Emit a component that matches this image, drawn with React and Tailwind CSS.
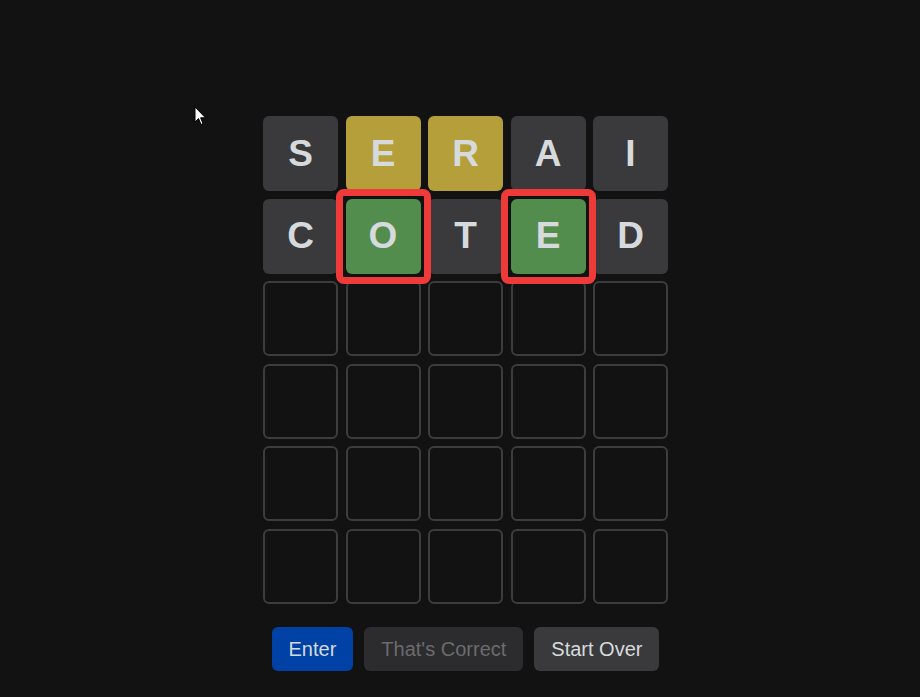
import React from "react";

const rows = [
  [
    ["S", "gray"],
    ["E", "yellow"],
    ["R", "yellow"],
    ["A", "gray"],
    ["I", "gray"],
  ],
  [
    ["C", "gray"],
    ["O", "green", true],
    ["T", "gray"],
    ["E", "green", true],
    ["D", "gray"],
  ],
];

const colors = {
  gray: "bg-[#3a3a3c]",
  yellow: "bg-[#b59f3b]",
  green: "bg-[#538d4e]",
};

function Tile({ letter, color, marked }) {
  if (!letter) {
    return (
      <div className="w-[75px] h-[75px] rounded-[6px] border-2 border-[#3d3d3f]" />
    );
  }
  return (
    <div
      className={`relative w-[75px] h-[75px] rounded-[6px] flex items-center justify-center text-[37px] font-bold text-[#d7dadc] ${colors[color]}`}
    >
      {letter}
      {marked && (
        <div className="absolute z-10 -inset-[10px] rounded-[8px] border-[7px] border-[#ef3a3a]" />
      )}
    </div>
  );
}

export default function App() {
  const grid = [...rows];
  while (grid.length < 6) grid.push([[], [], [], [], []]);

  return (
    <div
      className="relative min-h-screen bg-[#121212] flex flex-col items-center pt-[116px] pl-[11px]"
      style={{ fontFamily: '"Liberation Sans", Arial, sans-serif' }}
    >
      <svg
        className="absolute left-[194px] top-[106px]"
        width="13"
        height="20"
        viewBox="0 0 13 20"
      >
        <path
          d="M1 1 L1 16 L4.5 12.5 L7 18.5 L9 17.6 L6.6 11.8 L11.5 11.8 Z"
          fill="#fff"
          stroke="#000"
          strokeWidth="1"
        />
      </svg>
      <div className="flex flex-col gap-[7.6px]">
        {grid.map((row, i) => (
          <div key={i} className="flex gap-[7.5px]">
            {row.map((t, j) => (
              <Tile key={j} letter={t[0]} color={t[1]} marked={t[2]} />
            ))}
          </div>
        ))}
      </div>
      <div className="flex gap-[11px] mt-[23px]">
        <button className="h-[44px] px-[17px] rounded-[6px] bg-[#0041a6] text-[20px] text-[#d7dadc]">
          Enter
        </button>
        <button className="h-[44px] px-[17px] rounded-[6px] bg-[#2c2c2e] text-[20px] text-[#6b6b6d]">
          That's Correct
        </button>
        <button className="h-[44px] px-[17px] rounded-[6px] bg-[#3a3a3c] text-[20px] text-[#d7dadc]">
          Start Over
        </button>
      </div>
    </div>
  );
}
